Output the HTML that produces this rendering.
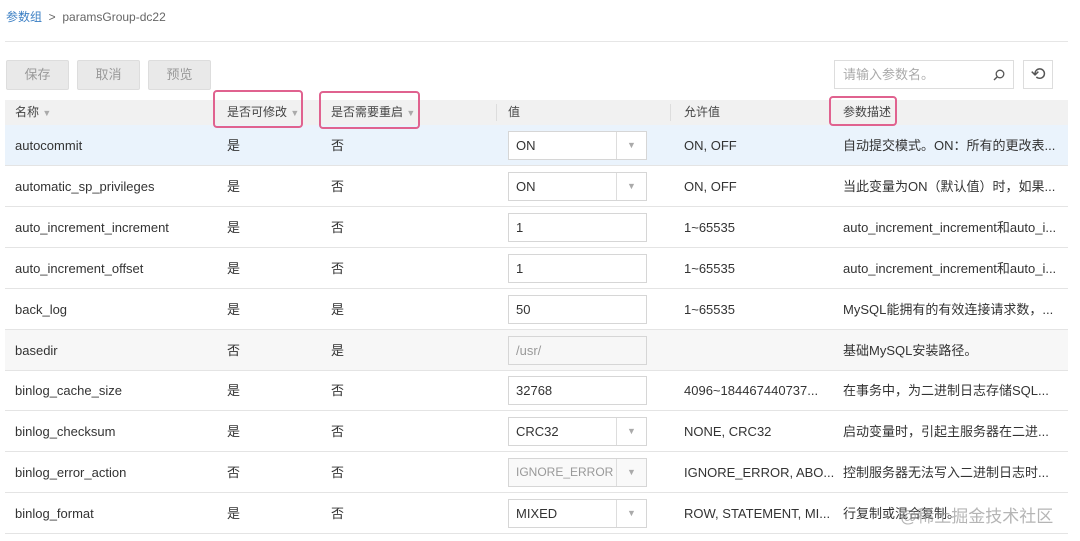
<!DOCTYPE html>
<html><head><meta charset="utf-8"><style>
*{margin:0;padding:0;box-sizing:border-box}
body{width:1080px;height:541px;background:#fff;font-family:"Liberation Sans","Noto Sans CJK SC",sans-serif;color:#333;position:relative;overflow:hidden;font-size:13px}
.a{position:absolute}
.bc{left:6px;top:8px;font-size:12px;color:#666}
.bc b{color:#3b7fc4;font-weight:normal}
.btn{top:60px;height:30px;background:#e9e9e9;border:1px solid #ddd;border-radius:2px;color:#999;font-size:13px;text-align:center;line-height:28px}
.hdr{left:5px;top:100px;width:1063px;height:25px;background:#f1f1f1;font-size:12px;color:#444}
.row{left:5px;width:1063px;height:41px;border-bottom:1px solid #e4e4e4}
.c{position:absolute;top:0;line-height:41px;white-space:nowrap}
.inp{position:absolute;left:503px;top:6px;width:139px;height:29px;border:1px solid #d6d6d6;background:#fff;line-height:27px;padding-left:7px}
.inp .ar{position:absolute;right:0;top:0;width:30px;height:27px;border-left:1px solid #ddd;color:#aaa;font-size:9px;text-align:center}
.box{position:absolute;border:2px solid #e0628f;border-radius:4px;z-index:5}
</style></head><body>
<div class="a bc"><b>参数组</b> &nbsp;&gt;&nbsp; paramsGroup-dc22</div>
<div class="a" style="left:5px;top:41px;width:1063px;height:1px;background:#e6e6e6"></div>
<div class="a btn" style="left:6px;width:63px">保存</div>
<div class="a btn" style="left:77px;width:63px">取消</div>
<div class="a btn" style="left:148px;width:63px">预览</div>
<div class="a" style="left:834px;top:60px;width:180px;height:29px;border:1px solid #ddd;color:#aaa;font-size:13px;line-height:27px;padding-left:8px">请输入参数名。<svg style="position:absolute;right:8px;top:8px" width="12" height="12" viewBox="0 0 12 12"><circle cx="7" cy="5" r="3.8" fill="none" stroke="#555" stroke-width="1.3"/><line x1="4.3" y1="7.7" x2="1" y2="11" stroke="#555" stroke-width="1.4"/></svg></div>
<div class="a" style="left:1023px;top:60px;width:30px;height:29px;border:1px solid #ddd;text-align:center;line-height:26px;font-size:18px;color:#555">⟲</div>
<div class="a hdr">
<span class="c" style="left:10px;line-height:25px">名称 <span style="color:#aaa;font-size:9px">▼</span></span>
<span class="c" style="left:222px;line-height:25px">是否可修改 <span style="color:#aaa;font-size:9px">▼</span></span>
<span class="c" style="left:326px;line-height:25px">是否需要重启 <span style="color:#aaa;font-size:9px">▼</span></span>
<div class="a" style="left:491px;top:4px;width:1px;height:17px;background:#ddd"></div>
<span class="c" style="left:503px;line-height:25px">值</span>
<div class="a" style="left:665px;top:4px;width:1px;height:17px;background:#ddd"></div>
<span class="c" style="left:679px;line-height:25px">允许值</span>
<span class="c" style="left:838px;line-height:25px">参数描述</span>
</div>
<div class="box" style="left:213px;top:90px;width:90px;height:38px"></div>
<div class="box" style="left:319px;top:91px;width:101px;height:38px"></div>
<div class="box" style="left:829px;top:96px;width:68px;height:30px"></div>

<div class="a row" style="top:125px;background:#eaf3fc"><span class="c" style="left:10px">autocommit</span><span class="c" style="left:222px">是</span><span class="c" style="left:326px">否</span><div class="inp">ON<span class="ar">▼</span></div><span class="c" style="left:679px">ON, OFF</span><span class="c" style="left:838px">自动提交模式。ON：所有的更改表...</span></div>
<div class="a row" style="top:166px"><span class="c" style="left:10px">automatic_sp_privileges</span><span class="c" style="left:222px">是</span><span class="c" style="left:326px">否</span><div class="inp">ON<span class="ar">▼</span></div><span class="c" style="left:679px">ON, OFF</span><span class="c" style="left:838px">当此变量为ON（默认值）时，如果...</span></div>
<div class="a row" style="top:207px"><span class="c" style="left:10px">auto_increment_increment</span><span class="c" style="left:222px">是</span><span class="c" style="left:326px">否</span><div class="inp">1</div><span class="c" style="left:679px">1~65535</span><span class="c" style="left:838px">auto_increment_increment和auto_i...</span></div>
<div class="a row" style="top:248px"><span class="c" style="left:10px">auto_increment_offset</span><span class="c" style="left:222px">是</span><span class="c" style="left:326px">否</span><div class="inp">1</div><span class="c" style="left:679px">1~65535</span><span class="c" style="left:838px">auto_increment_increment和auto_i...</span></div>
<div class="a row" style="top:289px"><span class="c" style="left:10px">back_log</span><span class="c" style="left:222px">是</span><span class="c" style="left:326px">是</span><div class="inp">50</div><span class="c" style="left:679px">1~65535</span><span class="c" style="left:838px">MySQL能拥有的有效连接请求数，...</span></div>
<div class="a row" style="top:330px;background:#f7f7f7"><span class="c" style="left:10px">basedir</span><span class="c" style="left:222px">否</span><span class="c" style="left:326px">是</span><div class="inp" style="background:#f7f7f7;color:#999">/usr/</div><span class="c" style="left:838px">基础MySQL安装路径。</span></div>
<div class="a row" style="top:370px"><span class="c" style="left:10px">binlog_cache_size</span><span class="c" style="left:222px">是</span><span class="c" style="left:326px">否</span><div class="inp">32768</div><span class="c" style="left:679px">4096~184467440737...</span><span class="c" style="left:838px">在事务中，为二进制日志存储SQL...</span></div>
<div class="a row" style="top:411px"><span class="c" style="left:10px">binlog_checksum</span><span class="c" style="left:222px">是</span><span class="c" style="left:326px">否</span><div class="inp">CRC32<span class="ar">▼</span></div><span class="c" style="left:679px">NONE, CRC32</span><span class="c" style="left:838px">启动变量时，引起主服务器在二进...</span></div>
<div class="a row" style="top:452px"><span class="c" style="left:10px">binlog_error_action</span><span class="c" style="left:222px">否</span><span class="c" style="left:326px">否</span><div class="inp" style="color:#999;background:#f9f9f9;font-size:12px">IGNORE_ERROR<span class="ar">▼</span></div><span class="c" style="left:679px">IGNORE_ERROR, ABO...</span><span class="c" style="left:838px">控制服务器无法写入二进制日志时...</span></div>
<div class="a row" style="top:493px"><span class="c" style="left:10px">binlog_format</span><span class="c" style="left:222px">是</span><span class="c" style="left:326px">否</span><div class="inp">MIXED<span class="ar">▼</span></div><span class="c" style="left:679px">ROW, STATEMENT, MI...</span><span class="c" style="left:838px">行复制或混合复制。</span></div>
<div class="a" style="left:900px;top:502px;font-size:17px;color:rgba(150,150,150,.7)">@稀土掘金技术社区</div>
</body></html>
